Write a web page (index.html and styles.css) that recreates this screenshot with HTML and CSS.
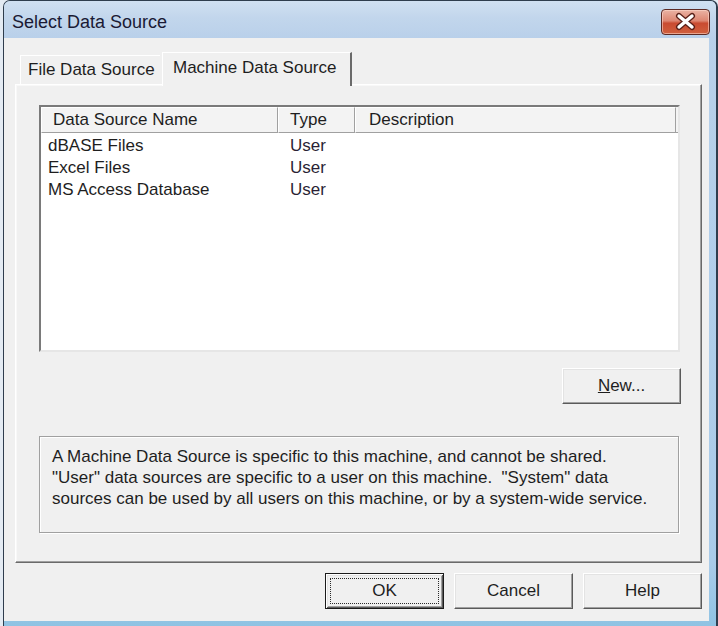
FILE: index.html
```html
<!DOCTYPE html>
<html>
<head>
<meta charset="utf-8">
<title>Select Data Source</title>
<link rel="stylesheet" href="styles.css">
</head>
<body>
<div class="window">
  <div class="titlebar">
    <span class="title">Select Data Source</span>
    <div class="close">
      <svg width="47" height="24" viewBox="0 0 47 24">
        <path d="M17 6 L30 17 M30 6 L17 17" stroke="#5a2018" stroke-width="6" stroke-linecap="round" fill="none"/>
        <path d="M17 6 L30 17 M30 6 L17 17" stroke="#ffffff" stroke-width="3.4" stroke-linecap="round" fill="none"/>
      </svg>
    </div>
  </div>
  <div class="client">
    <div class="tabs">
      <div class="tab">File Data Source</div>
      <div class="tab active">Machine Data Source</div>
    </div>
    <div class="panel">
      <div class="list">
        <div class="list-head">
          <div class="hcell c1">Data Source Name</div>
          <div class="hcell c2">Type</div>
          <div class="hcell c3">Description</div>
          <div class="hfill"></div>
        </div>
        <div class="rows">
          <div class="row"><span class="col1">dBASE Files</span><span class="col2">User</span></div>
          <div class="row"><span class="col1">Excel Files</span><span class="col2">User</span></div>
          <div class="row"><span class="col1">MS Access Database</span><span class="col2">User</span></div>
        </div>
      </div>
      <div class="new-row">
        <button class="btn new"><span class="label"><u>N</u>ew...</span></button>
      </div>
      <div class="info">A Machine Data Source is specific to this machine, and cannot be shared.<br>&quot;User&quot; data sources are specific to a user on this machine.&nbsp; &quot;System&quot; data<br>sources can be used by all users on this machine, or by a system-wide service.</div>
    </div>
    <div class="buttons">
      <button class="btn default"><span class="label focus">OK</span></button>
      <button class="btn"><span class="label">Cancel</span></button>
      <button class="btn"><span class="label">Help</span></button>
    </div>
  </div>
</div>
</body>
</html>
```

FILE: styles.css
```css
html, body {
  margin: 0;
  padding: 0;
}
body {
  width: 718px;
  height: 626px;
  overflow: hidden;
  background: #e4ebf3;
  font-family: "Liberation Sans", Arial, sans-serif;
  font-size: 17px;
  color: #1e1e1e;
}
.window {
  margin-left: 3px;
  width: 715px;
  height: 626px;
  box-sizing: border-box;
  border-style: solid;
  border-color: #2f3d4d;
  border-width: 1px 2px 0 1px;
  border-radius: 7px 7px 0 0;
  background: linear-gradient(#b9d1ea, #a9cbe9 90%, #8fc3e3);
  display: flex;
  flex-direction: column;
}
.titlebar {
  height: 37px;
  flex: none;
  display: flex;
  align-items: flex-start;
  justify-content: space-between;
  padding: 0 6px 0 8px;
  background: linear-gradient(#d0e0f1, #c2d6ec 45%, #b9d0ea);
  border-radius: 6px 6px 0 0;
}
.title {
  margin-top: 10px;
  font-size: 18px;
  line-height: 22px;
  color: #1a1a34;
}
.close {
  margin-top: 8px;
  width: 49px;
  height: 26px;
  box-sizing: border-box;
  border: 1px solid #5c2a24;
  border-radius: 4px;
  background: linear-gradient(#eab3a4, #dd8672 45%, #c94b31 55%, #d0603e);
  box-shadow: inset 0 0 0 1px rgba(255, 220, 210, 0.55);
  display: flex;
}
.close svg {
  display: block;
}
.client {
  flex: 1;
  margin: 0 7px 5px 0;
  background: #f0f0f0;
  padding: 14px 7px 0 11px;
  display: flex;
  flex-direction: column;
}
.tabs {
  height: 32px;
  display: flex;
  align-items: flex-end;
  padding-left: 5px;
}
.tab {
  box-sizing: border-box;
  width: 140px;
  height: 29px;
  padding-left: 7px;
  line-height: 28px;
  border-top: 1px solid #ffffff;
  border-left: 1px solid #ffffff;
  background: #f0f0f0;
  white-space: nowrap;
}
.tab.active {
  width: 190px;
  height: 34px;
  margin-left: 2px;
  margin-bottom: -2px;
  padding-left: 10px;
  line-height: 30px;
  border-right: 2px solid #6a6a6a;
  position: relative;
  z-index: 1;
}
.panel {
  box-sizing: border-box;
  width: 687px;
  height: 479px;
  border-style: solid;
  border-width: 1px;
  border-color: #ffffff #6a6a6a #6a6a6a #ffffff;
  box-shadow: inset -1px -1px #a0a0a0, inset 1px 1px #f8f8f8;
  padding: 20px 21px 0 23px;
}
.list {
  box-sizing: border-box;
  width: 641px;
  height: 247px;
  background: #ffffff;
  border: 2px solid;
  border-color: #7a7a7a #e6e6e6 #e6e6e6 #7a7a7a;
}
.list-head {
  display: flex;
  height: 26px;
}
.hcell {
  box-sizing: border-box;
  height: 26px;
  line-height: 24px;
  padding-left: 11px;
  background: #f3f3f3;
  border-style: solid;
  border-width: 1px;
  border-color: #ffffff #a0a0a0 #a0a0a0 #ffffff;
  white-space: nowrap;
}
.hcell.c1 { width: 237px; }
.hcell.c2 { width: 77px; }
.hcell.c3 { width: 321px; padding-left: 13px; }
.hfill {
  width: 2px;
  background: #f3f3f3;
  border-bottom: 1px solid #a0a0a0;
  box-sizing: border-box;
}
.rows {
  padding-top: 2px;
}
.row {
  display: flex;
  height: 22px;
  line-height: 22px;
  white-space: nowrap;
}
.col1 {
  width: 230px;
  padding-left: 7px;
}
.col2 {
  padding-left: 12px;
  color: #2a1f35;
}
.new-row {
  display: flex;
  justify-content: flex-end;
  margin-top: 16px;
  margin-right: -1px;
}
.btn {
  box-sizing: border-box;
  width: 119px;
  height: 36px;
  padding: 0;
  margin: 0;
  background: #f0f0f0;
  border: 1px solid;
  border-color: #ffffff #5a5a5a #5a5a5a #ffffff;
  box-shadow: inset -1px -1px #a0a0a0, inset 1px 1px #e3e3e3;
  font-family: "Liberation Sans", Arial, sans-serif;
  font-size: 17px;
  color: #1e1e1e;
  display: flex;
}
.btn .label {
  flex: 1;
  margin: 4px;
  display: flex;
  align-items: center;
  justify-content: center;
  border: 1px solid transparent;
}
.btn.default {
  border: 1px solid #1a1a1a;
  box-shadow: inset 1px 1px #ffffff, inset -1px -1px #5a5a5a, inset 2px 2px #e3e3e3, inset -2px -2px #a0a0a0;
}
.btn .label.focus {
  border: 1px dotted #2a2a2a;
}
.info {
  box-sizing: border-box;
  width: 640px;
  height: 97px;
  margin-top: 32px;
  border: 1px solid #a0a0a0;
  box-shadow: 1px 1px 0 #ffffff, inset 1px 1px 0 #ffffff;
  padding: 9px 0 0 12px;
  line-height: 21px;
  white-space: nowrap;
}
.buttons {
  display: flex;
  justify-content: flex-end;
  gap: 10px;
  margin-top: 10px;
}
```
